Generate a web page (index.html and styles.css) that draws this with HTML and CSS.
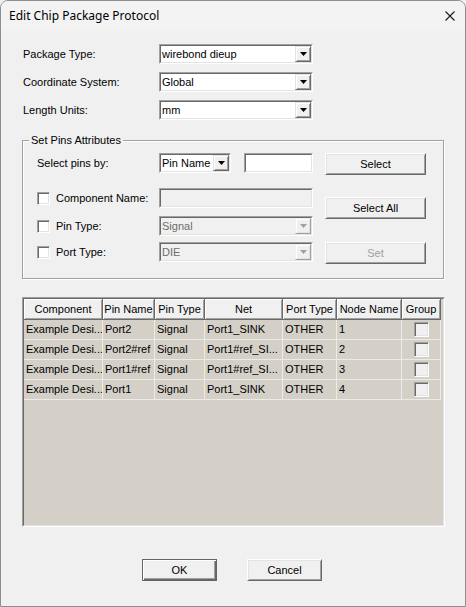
FILE: index.html
```html
<!DOCTYPE html>
<html>
<head>
<meta charset="utf-8">
<link rel="stylesheet" href="styles.css">
</head>
<body>
<div class="window">
  <div class="titlebar">
    <span class="title">Edit Chip Package Protocol</span>
    <span class="close"><svg width="10" height="10" viewBox="0 0 10 10"><path d="M0.5 0.5 L9.5 9.5 M9.5 0.5 L0.5 9.5" stroke="#1a1a1a" stroke-width="1.1" fill="none"/></svg></span>
  </div>
  <div class="content">
    <div class="form">
      <span class="label">Package Type:</span>
      <div class="combo"><div class="combo-in"><span class="combo-text">wirebond dieup</span><span class="drop"><svg width="7" height="4" viewBox="0 0 7 4"><polygon points="0,0 7,0 3.5,4" fill="#000"/></svg></span></div></div>
      <span class="label">Coordinate System:</span>
      <div class="combo"><div class="combo-in"><span class="combo-text">Global</span><span class="drop"><svg width="7" height="4" viewBox="0 0 7 4"><polygon points="0,0 7,0 3.5,4" fill="#000"/></svg></span></div></div>
      <span class="label">Length Units:</span>
      <div class="combo"><div class="combo-in"><span class="combo-text">mm</span><span class="drop"><svg width="7" height="4" viewBox="0 0 7 4"><polygon points="0,0 7,0 3.5,4" fill="#000"/></svg></span></div></div>
    </div>

    <fieldset class="group">
      <legend>Set Pins Attributes</legend>
      <div class="group-body">
        <div class="fields">
          <div class="frow">
            <span class="label">Select pins by:</span>
            <div class="pair">
              <div class="combo small"><div class="combo-in"><span class="combo-text">Pin Name</span><span class="drop"><svg width="7" height="4" viewBox="0 0 7 4"><polygon points="0,0 7,0 3.5,4" fill="#000"/></svg></span></div></div>
              <div class="field textbox"><div class="field-in"></div></div>
            </div>
          </div>
          <div class="frow r2">
            <label class="check"><span class="box"></span>Component Name:</label>
            <div class="field disabled"><div class="field-in"></div></div>
          </div>
          <div class="frow r3">
            <label class="check"><span class="box"></span>Pin Type:</label>
            <div class="combo disabled"><div class="combo-in"><span class="combo-text">Signal</span><span class="drop"><svg width="7" height="4" viewBox="0 0 7 4"><polygon points="0,0 7,0 3.5,4" fill="#a0a0a0"/></svg></span></div></div>
          </div>
          <div class="frow r4">
            <label class="check"><span class="box"></span>Port Type:</label>
            <div class="combo disabled"><div class="combo-in"><span class="combo-text">DIE</span><span class="drop"><svg width="7" height="4" viewBox="0 0 7 4"><polygon points="0,0 7,0 3.5,4" fill="#a0a0a0"/></svg></span></div></div>
          </div>
        </div>
        <div class="buttons">
          <button class="btn">Select</button>
          <button class="btn b2">Select All</button>
          <button class="btn b3 btn-disabled">Set</button>
        </div>
      </div>
    </fieldset>

    <div class="list">
      <div class="list-in">
        <table class="grid">
          <colgroup>
            <col class="c1"><col class="c2"><col class="c3"><col class="c4"><col class="c5"><col class="c6"><col class="c7">
          </colgroup>
          <thead>
            <tr><th>Component</th><th>Pin Name</th><th>Pin Type</th><th>Net</th><th>Port Type</th><th>Node Name</th><th>Group</th></tr>
          </thead>
          <tbody>
            <tr><td>Example Desi...</td><td>Port2</td><td>Signal</td><td>Port1_SINK</td><td>OTHER</td><td>1</td><td class="cc"><span class="gbox"></span></td></tr>
            <tr><td>Example Desi...</td><td>Port2#ref</td><td>Signal</td><td>Port1#ref_SI...</td><td>OTHER</td><td>2</td><td class="cc"><span class="gbox"></span></td></tr>
            <tr><td>Example Desi...</td><td>Port1#ref</td><td>Signal</td><td>Port1#ref_SI...</td><td>OTHER</td><td>3</td><td class="cc"><span class="gbox"></span></td></tr>
            <tr><td>Example Desi...</td><td>Port1</td><td>Signal</td><td>Port1_SINK</td><td>OTHER</td><td>4</td><td class="cc"><span class="gbox"></span></td></tr>
          </tbody>
        </table>
      </div>
    </div>

    <div class="actions">
      <button class="btn btn-action btn-default">OK</button>
      <button class="btn btn-action">Cancel</button>
    </div>
  </div>
</div>
</body>
</html>
```

FILE: styles.css
```css
* { box-sizing: border-box; }
html, body { margin: 0; padding: 0; }
body {
  width: 466px;
  height: 607px;
  background: #f0f0f0;
  font-family: "Liberation Sans", Arial, sans-serif;
  font-size: 11px;
  color: #000;
  overflow: hidden;
}
.window {
  width: 466px;
  height: 607px;
  border: 1px solid #8e8e8e;
  border-radius: 8px 8px 0 0;
  background: #f0f0f0;
  overflow: hidden;
  display: flex;
  flex-direction: column;
}
.titlebar {
  flex: none;
  height: 30px;
  display: flex;
  align-items: center;
  justify-content: space-between;
  padding-left: 8px;
  background: #f3f3f3;
  font-family: "Noto Sans", "Open Sans", sans-serif;
  font-size: 12px;
  color: #000;
}
.title { line-height: 16px; }
.close {
  width: 30px;
  height: 30px;
  display: flex;
  align-items: center;
  justify-content: center;
}
.content {
  padding: 13px 0 0 21px;
}

/* top form */
.form {
  display: grid;
  grid-template-columns: 136px 154px;
  grid-auto-rows: 20px;
  row-gap: 8px;
  align-items: center;
  padding-left: 1px;
}
.label { white-space: nowrap; line-height: 14px; }

/* combo box */
.combo {
  height: 20px;
  border: 1px solid;
  border-color: #a0a0a0 #ffffff #ffffff #a0a0a0;
}
.combo-in {
  height: 100%;
  display: flex;
  border: 1px solid;
  border-color: #696969 #e3e3e3 #e3e3e3 #696969;
  background: #fff;
}
.combo-text {
  flex: 1;
  padding-left: 1px;
  line-height: 16px;
  white-space: nowrap;
  overflow: hidden;
}
.drop {
  flex: none;
  width: 16px;
  display: flex;
  align-items: center;
  justify-content: center;
  background: #f0f0f0;
  border: 1px solid;
  border-color: #e3e3e3 #696969 #696969 #e3e3e3;
  box-shadow: inset 1px 1px #fff, inset -1px -1px #a0a0a0;
}
.combo.disabled .combo-in { background: #f0f0f0; color: #6d6d6d; }
.combo.disabled .drop {
  border-color: #f0f0f0 #a0a0a0 #a0a0a0 #f0f0f0;
  box-shadow: inset 1px 1px #fff, inset -1px -1px #e3e3e3;
}

/* text fields */
.field {
  height: 20px;
  border: 1px solid;
  border-color: #a0a0a0 #ffffff #ffffff #a0a0a0;
}
.field-in {
  height: 100%;
  border: 1px solid;
  border-color: #696969 #e3e3e3 #e3e3e3 #696969;
  background: #fff;
}
.field.disabled .field-in { background: #f0f0f0; }

/* group box */
.group {
  margin: 13px 0 0 0;
  width: 422px;
  min-width: 0;
  padding: 6px 0 14px 14px;
  border: 1px solid #a0a0a0;
  box-shadow: inset 1px 1px #fff, 1px 1px #fff;
}
.group legend {
  padding: 0 2px;
  margin-left: -8px;
  line-height: 14px;
  background: #f0f0f0;
}
.group-body { display: flex; }
.fields {
  width: 276px;
  display: flex;
  flex-direction: column;
}
.frow {
  display: grid;
  grid-template-columns: 122px 154px;
  height: 20px;
  align-items: center;
}
.frow.r2 { margin-top: 15px; }
.frow.r3 { margin-top: 8px; }
.frow.r4 { margin-top: 6px; }
.pair { display: flex; gap: 13px; }
.combo.small { width: 72px; }
.textbox { width: 69px; }
.check {
  display: flex;
  align-items: center;
  gap: 6px;
  white-space: nowrap;
}
.box {
  width: 13px;
  height: 13px;
  flex: none;
  background: #fff;
  border: 1px solid;
  border-color: #a0a0a0 #fff #fff #a0a0a0;
  box-shadow: inset 1px 1px #696969, inset -1px -1px #e3e3e3;
}

/* buttons */
.buttons {
  margin-left: 12px;
  display: flex;
  flex-direction: column;
}
.btn {
  width: 101px;
  height: 22px;
  padding: 0;
  font-family: "Liberation Sans", Arial, sans-serif;
  font-size: 11px;
  color: #000;
  background: #f0f0f0;
  border: 1px solid;
  border-color: #fff #696969 #696969 #fff;
  box-shadow: inset 1px 1px #e3e3e3, inset -1px -1px #a0a0a0;
  border-radius: 0;
}
.buttons .b2 { margin-top: 22px; }
.buttons .b3 { margin-top: 23px; }
.btn-disabled { color: #a0a0a0; }

/* list view */
.list {
  margin-top: 18px;
  width: 423px;
  height: 230px;
  border: 1px solid;
  border-color: #a0a0a0 #fff #fff #a0a0a0;
}
.list-in {
  height: 100%;
  border: 1px solid;
  border-color: #696969 #e3e3e3 #e3e3e3 #696969;
  background: #d4d0c8;
  overflow: hidden;
}
.grid {
  table-layout: fixed;
  width: 417px;
  border-collapse: separate;
  border-spacing: 0;
}
.c1 { width: 79px; }
.c2 { width: 52px; }
.c3 { width: 50px; }
.c4 { width: 78px; }
.c5 { width: 54px; }
.c6 { width: 65px; }
.c7 { width: 39px; }
.grid th {
  padding: 0;
  font-weight: normal;
  line-height: 20px;
  text-align: center;
  background: #f0f0f0;
  border-right: 1px solid #696969;
  border-bottom: 1px solid #696969;
  box-shadow: inset 1px 1px #fff, inset -1px -1px #a0a0a0;
  white-space: nowrap;
  overflow: hidden;
}
.grid td {
  padding: 0 0 0 2px;
  line-height: 19px;
  border-right: 1px solid #ecebe7;
  border-bottom: 1px solid #ecebe7;
  white-space: nowrap;
  overflow: hidden;
}
.grid td.cc { text-align: center; padding: 0; }
.gbox {
  display: inline-block;
  vertical-align: middle;
  width: 15px;
  height: 15px;
  background: #f0f0f0;
  border: 1px solid;
  border-color: #a0a0a0 #fff #fff #a0a0a0;
  box-shadow: inset 1px 1px #696969, inset -1px -1px #e3e3e3;
  margin-top: -1px;
}

/* bottom actions */
.actions {
  width: 420px;
  margin-top: 32px;
  display: flex;
  justify-content: center;
  gap: 30px;
}
.btn-action { width: 75px; }
.btn-default {
  border: 1px solid #646464;
  box-shadow: inset 1px 1px #fff, inset -1px -1px #696969, inset -2px -2px #a0a0a0;
}
```
